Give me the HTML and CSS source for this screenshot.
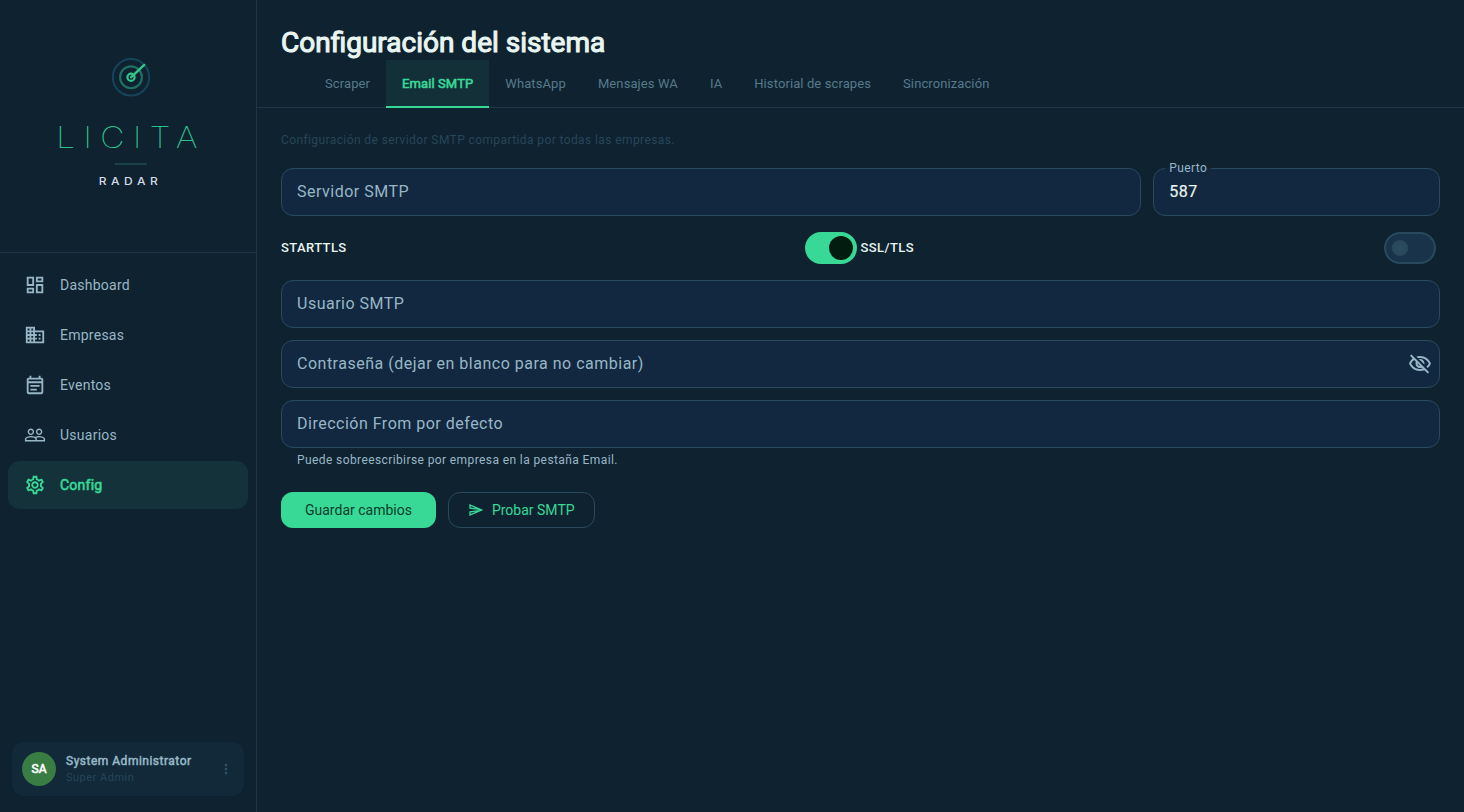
FILE: index.html
```html
<!DOCTYPE html>
<html lang="es">
<head>
  <meta charset="UTF-8" />
  <meta name="viewport" content="width=device-width, initial-scale=1.0"/>
  <title>Licita Radar - Configuración</title>
  <link rel="stylesheet" href="styles.css">
</head>
<body>
  <!-- Barra lateral -->
  <aside class="sidebar">
    <div class="logo">
      <svg class="logo-radar" viewBox="0 0 40 40" fill="none">
        <circle cx="20" cy="20.3" r="18.2" stroke="#16445c" stroke-width="2"/>
        <circle cx="20" cy="20.3" r="10.9" stroke="#1f7064" stroke-width="2.1"/>
        <circle cx="20" cy="20.3" r="3.6" stroke="#34c58d" stroke-width="2.2"/>
        <path d="M20 20.3L33.2 7.9" stroke="#34c58d" stroke-width="2.4" stroke-linecap="round"/>
      </svg>
      <div class="logo-name">LICITA</div>
      <div class="logo-line"></div>
      <div class="logo-sub">RADAR</div>
    </div>

    <nav class="menu">
      <a class="menu-item">
        <svg viewBox="0 0 24 24"><path d="M19 5v2h-4V5h4M9 5v6H5V5h4m10 8v6h-4v-6h4M9 17v2H5v-2h4M21 3h-8v6h8V3zM11 3H3v10h8V3zm10 8h-8v10h8V11zm-10 4H3v6h8v-6z"/></svg>
        <span>Dashboard</span>
      </a>
      <a class="menu-item">
        <svg viewBox="0 0 24 24"><path d="M12 7V3H2v18h20V7H12zM6 19H4v-2h2v2zm0-4H4v-2h2v2zm0-4H4V9h2v2zm0-4H4V5h2v2zm4 12H8v-2h2v2zm0-4H8v-2h2v2zm0-4H8V9h2v2zm0-4H8V5h2v2zm10 12h-8v-2h2v-2h-2v-2h2v-2h-2V9h8v10zm-2-8h-2v2h2v-2zm0 4h-2v2h2v-2z"/></svg>
        <span>Empresas</span>
      </a>
      <a class="menu-item">
        <svg viewBox="0 0 24 24"><path d="M19 4h-1V2h-2v2H8V2H6v2H5c-1.11 0-1.99.9-1.99 2L3 20c0 1.1.89 2 2 2h14c1.1 0 2-.9 2-2V6c0-1.1-.9-2-2-2zm0 16H5V10h14v10zm0-12H5V6h14v2zM7 12h10v2H7zm0 4h7v2H7z"/></svg>
        <span>Eventos</span>
      </a>
      <a class="menu-item">
        <svg viewBox="0 0 24 24"><path d="M16.5 13c-1.2 0-3.07.34-4.5 1-1.43-.67-3.3-1-4.5-1C5.33 13 1 14.08 1 16.25V19h22v-2.75c0-2.17-4.33-3.25-6.5-3.25zm-4 4.5h-10v-1.25c0-.54 2.56-1.75 5-1.75s5 1.21 5 1.75v1.25zm9 0H14v-1.25c0-.46-.2-.86-.52-1.22.88-.3 1.96-.53 3.02-.53 2.44 0 5 1.21 5 1.75v1.25zM7.5 12c1.93 0 3.5-1.57 3.5-3.5S9.43 5 7.5 5 4 6.57 4 8.5 5.57 12 7.5 12zm0-5.5c1.1 0 2 .9 2 2s-.9 2-2 2-2-.9-2-2 .9-2 2-2zm9 5.5c1.93 0 3.5-1.57 3.5-3.5S18.43 5 16.5 5 13 6.57 13 8.5s1.57 3.5 3.5 3.5zm0-5.5c1.1 0 2 .9 2 2s-.9 2-2 2-2-.9-2-2 .9-2 2-2z"/></svg>
        <span>Usuarios</span>
      </a>
      <a class="menu-item activo">
        <svg viewBox="0 0 24 24"><path d="M19.43 12.98c.04-.32.07-.64.07-.98 0-.34-.03-.66-.07-.98l2.11-1.65c.19-.15.24-.42.12-.64l-2-3.46c-.09-.16-.26-.25-.44-.25-.06 0-.12.01-.17.03l-2.49 1c-.52-.4-1.08-.73-1.69-.98l-.38-2.65C14.46 2.18 14.25 2 14 2h-4c-.25 0-.46.18-.49.42l-.38 2.65c-.61.25-1.17.59-1.69.98l-2.49-1c-.06-.02-.12-.03-.18-.03-.17 0-.34.09-.43.25l-2 3.46c-.13.22-.07.49.12.64l2.11 1.65c-.04.32-.07.65-.07.98 0 .33.03.66.07.98l-2.11 1.65c-.19.15-.24.42-.12.64l2 3.46c.09.16.26.25.44.25.06 0 .12-.01.17-.03l2.49-1c.52.4 1.08.73 1.69.98l.38 2.65c.03.24.24.42.49.42h4c.25 0 .46-.18.49-.42l.38-2.65c.61-.25 1.17-.59 1.69-.98l2.49 1c.06.02.12.03.18.03.17 0 .34-.09.43-.25l2-3.46c.12-.22.07-.49-.12-.64l-2.11-1.65zm-1.98-1.71c.04.31.05.52.05.73 0 .21-.02.43-.05.73l-.14 1.13.89.7 1.08.84-.7 1.21-1.27-.51-1.04-.42-.9.68c-.43.32-.84.56-1.25.73l-1.06.43-.16 1.13-.2 1.35h-1.4l-.19-1.35-.16-1.13-1.06-.43c-.43-.18-.83-.41-1.23-.71l-.91-.7-1.06.43-1.27.51-.7-1.21 1.08-.84.89-.7-.14-1.13c-.03-.31-.05-.54-.05-.74s.02-.43.05-.73l.14-1.13-.89-.7-1.08-.84.7-1.21 1.27.51 1.04.42.9-.68c.43-.32.84-.56 1.25-.73l1.06-.43.16-1.13.2-1.35h1.39l.19 1.35.16 1.13 1.06.43c.43.18.83.41 1.23.71l.91.7 1.06-.43 1.27-.51.7 1.21-1.07.85-.89.7.14 1.13zM12 8c-2.21 0-4 1.79-4 4s1.79 4 4 4 4-1.79 4-4-1.79-4-4-4zm0 6c-1.1 0-2-.9-2-2s.9-2 2-2 2 .9 2 2-.9 2-2 2z"/></svg>
        <span>Config</span>
      </a>
    </nav>

    <div class="usuario">
      <div class="avatar">SA</div>
      <div class="usuario-datos">
        <div class="usuario-nombre">System Administrator</div>
        <div class="usuario-rol">Super Admin</div>
      </div>
      <svg class="usuario-mas" viewBox="0 0 24 24"><path d="M12 8c1.1 0 2-.9 2-2s-.9-2-2-2-2 .9-2 2 .9 2 2 2zm0 2c-1.1 0-2 .9-2 2s.9 2 2 2 2-.9 2-2-.9-2-2-2zm0 6c-1.1 0-2 .9-2 2s.9 2 2 2 2-.9 2-2-.9-2-2-2z"/></svg>
    </div>
  </aside>

  <!-- Contenido -->
  <main class="main">
    <h1>Configuración del sistema</h1>
    <div class="tabs">
      <div class="tab">Scraper</div>
      <div class="tab activo">Email SMTP</div>
      <div class="tab">WhatsApp</div>
      <div class="tab">Mensajes WA</div>
      <div class="tab">IA</div>
      <div class="tab">Historial de scrapes</div>
      <div class="tab">Sincronización</div>
    </div>

    <div class="form">
      <p class="intro">Configuración de servidor SMTP compartida por todas las empresas.</p>
      <div class="fila">
        <div class="campo">Servidor SMTP</div>
        <div class="campo">
          <span class="etiqueta">Puerto</span>
          <span class="valor">587</span>
        </div>
      </div>
      <div class="switches">
        <div class="opcion">
          <span>STARTTLS</span>
          <div class="switch on"><i></i></div>
        </div>
        <div class="opcion">
          <span>SSL/TLS</span>
          <div class="switch"><i></i></div>
        </div>
      </div>
      <div class="campo">Usuario SMTP</div>
      <div class="campo">
        <span>Contraseña (dejar en blanco para no cambiar)</span>
        <svg class="ojo" viewBox="0 0 24 24"><path d="M12 6c3.79 0 7.17 2.13 8.82 5.5-.59 1.22-1.42 2.27-2.41 3.12l1.41 1.41c1.39-1.23 2.49-2.77 3.18-4.53C21.27 7.11 17 4 12 4c-1.27 0-2.49.2-3.64.57l1.65 1.65C10.66 6.09 11.32 6 12 6zm-1.07 1.14L13 9.21c.57.25 1.03.71 1.28 1.28l2.07 2.07c.08-.34.14-.7.14-1.07C16.5 9.01 14.48 7 12 7c-.37 0-.72.05-1.07.14zM2.01 3.87l2.68 2.68C3.06 7.83 1.77 9.53 1 11.5 2.73 15.89 7 19 12 19c1.52 0 2.98-.29 4.32-.82l3.42 3.42 1.41-1.41L3.42 2.45 2.01 3.87zm7.5 7.5l2.61 2.61c-.04.01-.08.02-.12.02-1.38 0-2.5-1.12-2.5-2.5 0-.05.01-.08.01-.13zm-3.4-3.4l1.75 1.75c-.23.55-.36 1.15-.36 1.78 0 2.48 2.02 4.5 4.5 4.5.63 0 1.23-.13 1.77-.36l.98.98c-.88.24-1.8.38-2.75.38-3.79 0-7.17-2.13-8.82-5.5.7-1.43 1.72-2.61 2.93-3.53z"/></svg>
      </div>
      <div class="campo">Dirección From por defecto</div>
      <p class="ayuda">Puede sobreescribirse por empresa en la pestaña Email.</p>
      <div class="botones">
        <button class="btn-guardar">Guardar cambios</button>
        <button class="btn-probar">
          <svg viewBox="0 0 24 24"><path d="M4.01 6.03l7.51 3.22-7.52-1 .01-2.22m7.5 8.72L4 17.97v-2.22l7.51-1M2.01 3L2 10l15 2-15 2 .01 7L23 12 2.01 3z"/></svg>
          Probar SMTP
        </button>
      </div>
    </div>
  </main>
</body>
</html>
```
FILE: styles.css
```css
* { box-sizing: border-box; }
body {
  font-family: Roboto, sans-serif;
  background: #0f2230;
  color: #e8f5f0;
  margin: 0;
  height: 100vh;
  display: flex;
  overflow: hidden;
}
svg { fill: currentColor; flex-shrink: 0; }

/* Barra lateral */
.sidebar {
  width: 257px;
  flex-shrink: 0;
  display: flex;
  flex-direction: column;
  border-right: 1px solid #1c3644;
}
.logo {
  height: 253px;
  padding-top: 57px;
  border-bottom: 1px solid #1c3644;
  display: flex;
  flex-direction: column;
  align-items: center;
}
.logo-radar { width: 40px; height: 40px; margin-left: 6px; fill: none; }
.logo-name {
  font-family: Inter, sans-serif;
  font-weight: 100;
  font-size: 29px;
  line-height: 36px;
  letter-spacing: 7.4px;
  margin-top: 23px;
  margin-left: 7px;
  transform: scaleX(1.15);
  color: #34d399;
  -webkit-text-stroke: 0.2px;
}
.logo-line { width: 32px; height: 2px; background: #1a4248; margin: 7px 0 0 5px; }
.logo-sub {
  font-family: Inter, sans-serif;
  font-weight: 500;
  font-size: 10px;
  line-height: 12px;
  letter-spacing: 3.8px;
  margin-top: 10px;
  margin-left: 5px;
  transform: scaleX(1.2);
  color: #d5dce6;
}
.menu { padding: 8px; flex: 1; }
.menu-item {
  display: flex;
  align-items: center;
  gap: 14px;
  height: 48px;
  margin-bottom: 2px;
  padding: 0 16px;
  border-radius: 12px;
  font-size: 14px;
  letter-spacing: 0.25px;
  color: #98b7c6;
}
.menu-item svg { width: 22px; height: 22px; }
.menu-item.activo {
  background: #13323a;
  color: #38d996;
}
.menu-item.activo span { -webkit-text-stroke: 0.6px; }
.usuario {
  display: flex;
  align-items: center;
  height: 54px;
  margin: 0 12px 16px;
  padding: 0 10px;
  border-radius: 12px;
  background: #112939;
}
.avatar {
  width: 34px;
  height: 34px;
  border-radius: 50%;
  background: #3a7d44;
  color: #fff;
  font-size: 12px;
  line-height: 34px;
  text-align: center;
  -webkit-text-stroke: 0.6px;
}
.usuario-datos { flex: 1; padding-left: 10px; }
.usuario-nombre {
  font-size: 12px;
  line-height: 17px;
  letter-spacing: 0.5px;
  color: #98b7c6;
  -webkit-text-stroke: 0.5px;
}
.usuario-rol { font-size: 11px; line-height: 15px; letter-spacing: 0.5px; color: #26465a; }
.usuario-mas { width: 16px; height: 16px; color: #31566a; }

/* Contenido */
.main { flex: 1; }
h1 {
  margin: 0;
  padding: 25px 24px 0;
  height: 60px;
  font-size: 28px;
  font-weight: 400;
  line-height: 36px;
  letter-spacing: 0;
  -webkit-text-stroke: 1.1px;
}
.tabs {
  display: flex;
  height: 48px;
  padding-left: 52px;
  border-bottom: 1px solid #1f3846;
}
.tab {
  height: 48px;
  padding: 0 16px;
  line-height: 48px;
  font-size: 13px;
  letter-spacing: 0.1px;
  color: #567a8b;
}
.tab.activo {
  background: #133039;
  color: #38d996;
  border-bottom: 2px solid #38d996;
  -webkit-text-stroke: 0.6px;
}
.form { padding: 24px; }
.intro {
  margin: 0 0 20px;
  font-size: 12px;
  line-height: 16px;
  letter-spacing: 0.4px;
  color: #26465a;
}
.fila {
  display: grid;
  grid-template-columns: 3fr 1fr;
  gap: 12px;
}
.campo {
  position: relative;
  display: flex;
  align-items: center;
  justify-content: space-between;
  height: 48px;
  margin-bottom: 12px;
  padding: 0 7px 2px 15px;
  border: 1px solid #294a5c;
  border-radius: 12px;
  background: #122840;
  font-size: 16px;
  letter-spacing: 0.5px;
  color: #98b7c6;
}
.fila .campo { margin-bottom: 0; }
.valor { color: #e8f5f0; -webkit-text-stroke: 0.2px; }
/* etiqueta flotante sobre el borde */
.etiqueta {
  position: absolute;
  top: -9px;
  left: 11px;
  padding: 0 4px;
  font-size: 12px;
  line-height: 16px;
  letter-spacing: 0.4px;
  background: linear-gradient(#0f2230 8px, #122840 8px);
}
.ojo { width: 24px; height: 24px; margin-top: 2px; }
.switches { display: flex; height: 64px; }
.opcion {
  flex: 1;
  display: flex;
  align-items: center;
  justify-content: space-between;
  padding-right: 4px;
  font-size: 13px;
  font-weight: 500;
  letter-spacing: 0.4px;
}
.opcion span { padding-bottom: 1px; }
.switch {
  display: flex;
  align-items: center;
  width: 52px;
  height: 32px;
  padding-left: 6px;
  border: 2px solid #294a5c;
  border-radius: 16px;
  background: #18334a;
}
.switch i { width: 16px; height: 16px; border-radius: 50%; background: #294a5c; }
.switch.on { background: #38d996; border-color: #38d996; padding-left: 22px; }
.switch.on i { width: 24px; height: 24px; background: #021d10; }
.ayuda {
  margin: -8px 0 24px 16px;
  font-size: 12px;
  line-height: 16px;
  letter-spacing: 0.4px;
  color: #98b7c6;
}
.botones { display: flex; gap: 12px; }
button {
  display: flex;
  align-items: center;
  height: 36px;
  border: none;
  border-radius: 12px;
  font-family: inherit;
  font-size: 14px;
  letter-spacing: 0;
}
.btn-guardar { padding: 0 24px; background: #38d996; color: #0b3d2a; }
.btn-probar {
  gap: 8px;
  padding: 0 19px;
  background: none;
  border: 1px solid #294a5c;
  color: #38d996;
}
.btn-probar svg { width: 16px; height: 16px; }
```
